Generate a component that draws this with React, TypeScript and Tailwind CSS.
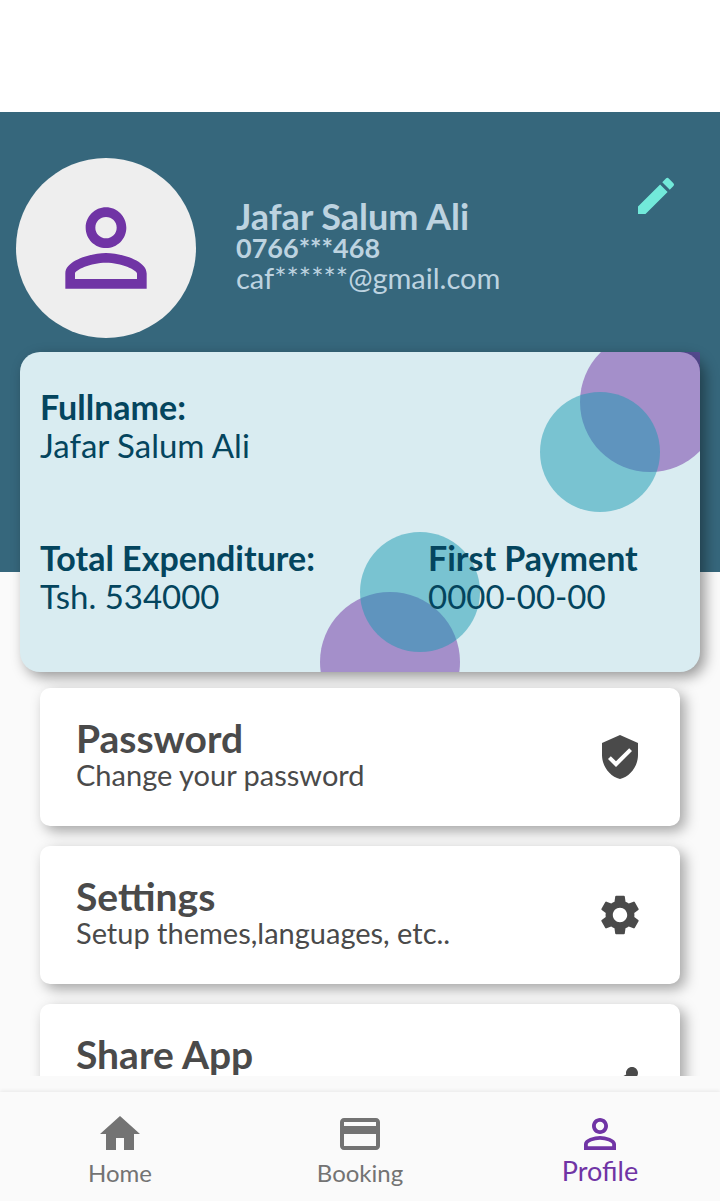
import type { IconType } from "react-icons";
import {
  MdCreditCard,
  MdEdit,
  MdHome,
  MdPersonOutline,
  MdSettings,
  MdShare,
  MdVerifiedUser,
} from "react-icons/md";

type MenuItem = { title: string; detail?: string; icon: IconType };

const menu: MenuItem[] = [
  { title: "Password", detail: "Change your password", icon: MdVerifiedUser },
  { title: "Settings", detail: "Setup themes,languages, etc..", icon: MdSettings },
  { title: "Share App", icon: MdShare },
];

function Field({ label, value }: { label: string; value: string }) {
  return (
    <div className="leading-[38px] whitespace-nowrap">
      <dt className="text-[34px] font-bold">{label}</dt>
      <dd className="text-[33px]">{value}</dd>
    </div>
  );
}

function ProfileHeader() {
  return (
    <header className="flex h-[460px] items-start bg-[#36677c] pt-[46px] pr-10 pl-4">
      <div className="flex size-[180px] shrink-0 items-center justify-center rounded-full bg-[#eeeeee] text-[#7034a5]">
        <MdPersonOutline size={122} />
      </div>
      <div className="flex h-[180px] flex-1 flex-col justify-center pb-1 pl-10 text-[#bdd3e0]">
        <h1 className="text-[36px] leading-[34px] font-bold">Jafar Salum Ali</h1>
        <p className="text-[27px] leading-[30px] font-bold">0766***468</p>
        <p className="text-[29px] leading-[30px]">caf******@gmail.com</p>
      </div>
      <button type="button" aria-label="Edit" className="mt-3.5 text-[#72e9da]">
        <MdEdit size={48} />
      </button>
    </header>
  );
}

function SummaryCard() {
  return (
    <section className="relative mx-5 -mt-[220px] h-80 rounded-[20px] bg-[#d9ecf1] px-5 pt-9 text-[#04455e] shadow-[5px_5px_14px_rgba(0,0,0,0.4)]">
      <div className="absolute inset-0 overflow-hidden">
        <div className="absolute -top-5 -right-5 size-[140px] rounded-full bg-[#6f32a3]/50" />
        <div className="absolute top-10 right-10 size-[120px] rounded-full bg-[#199ab1]/50" />
        <div className="absolute top-60 left-[300px] size-[140px] rounded-full bg-[#6f32a3]/50" />
        <div className="absolute top-[180px] left-[340px] size-[120px] rounded-full bg-[#199ab1]/50" />
      </div>
      <dl className="relative grid grid-cols-[388fr_252fr] gap-y-[75px]">
        <div className="col-span-2">
          <Field label="Fullname:" value="Jafar Salum Ali" />
        </div>
        <Field label="Total Expenditure:" value="Tsh. 534000" />
        <Field label="First Payment" value="0000-00-00" />
      </dl>
    </section>
  );
}

function MenuCard({ title, detail, icon: Icon }: MenuItem) {
  return (
    <button
      type="button"
      className={`flex w-full shrink-0 items-stretch justify-between rounded-[10px] bg-white px-9 text-left text-[#4a4a4a] shadow-[5px_5px_14px_rgba(0,0,0,0.35)] ${
        detail ? "h-[138px]" : "h-[166px]"
      }`}
    >
      <span className="flex flex-col pt-7">
        <span className="text-[39px] leading-[44px] font-bold">{title}</span>
        {detail && <span className="text-[29px] leading-[30px]">{detail}</span>}
      </span>
      <Icon size={48} className="self-center" />
    </button>
  );
}

function BottomNav() {
  return (
    <nav className="grid h-[109px] shrink-0 grid-cols-3 bg-[#fafafa] text-[#737373] shadow-[0_-1px_4px_rgba(0,0,0,0.08)]">
      <a href="#home" className="flex flex-col items-center pt-[18px]">
        <MdHome size={48} />
        <span className="text-[24px] leading-[30px]">Home</span>
      </a>
      <a href="#booking" className="flex flex-col items-center pt-[18px]">
        <MdCreditCard size={48} />
        <span className="text-[24px] leading-[30px]">Booking</span>
      </a>
      <a href="#profile" aria-current="page" className="flex flex-col items-center pt-[18px] text-[#7034a5]">
        <MdPersonOutline size={48} />
        <span className="text-[27px] leading-[26px]">Profile</span>
      </a>
    </nav>
  );
}

export default function App() {
  return (
    <div className="flex h-screen flex-col bg-[#fafafa] font-['Lato',sans-serif]">
      <div className="h-28 shrink-0 bg-white" />
      <main className="min-h-0 flex-1 overflow-y-auto [scrollbar-width:none]">
        <ProfileHeader />
        <SummaryCard />
        <div className="relative mt-4 flex flex-col gap-5 px-10 pb-5">
          {menu.map((item) => (
            <MenuCard key={item.title} {...item} />
          ))}
        </div>
      </main>
      <div className="h-4 shrink-0" />
      <BottomNav />
    </div>
  );
}
